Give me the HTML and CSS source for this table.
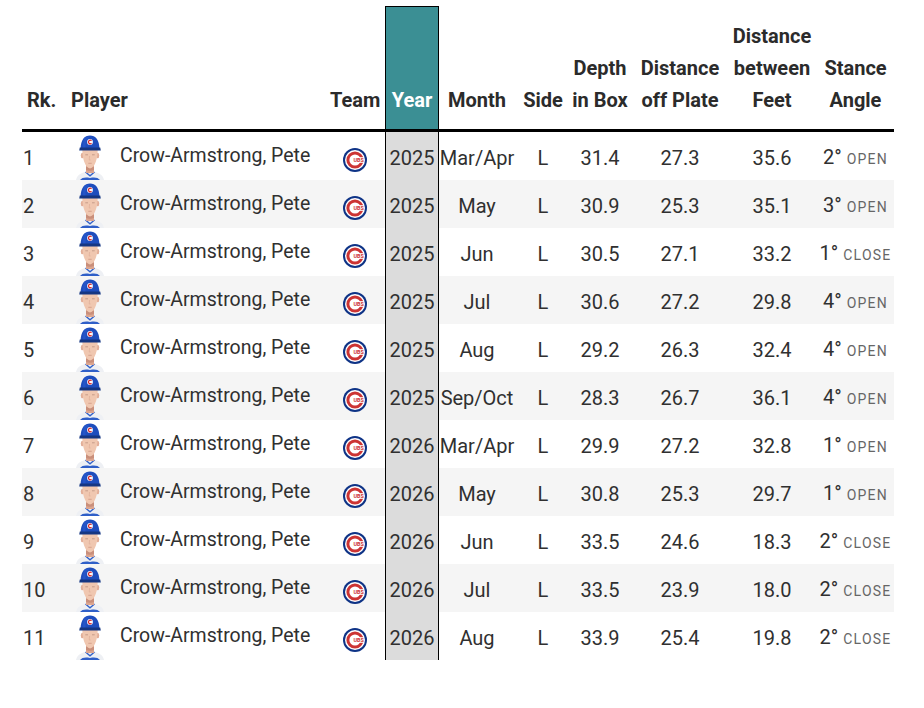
FILE: index.html
```html
<!DOCTYPE html>
<html lang="en">
<head>
<meta charset="utf-8">
<title>Batting Stance</title>
<link rel="stylesheet" href="styles.css">
</head>
<body>
<div class="page">
<table class="stats">
  <colgroup>
    <col class="c-rk"><col class="c-img"><col class="c-name"><col class="c-team"><col class="c-year">
    <col class="c-month"><col class="c-side"><col class="c-depth"><col class="c-dop"><col class="c-feet"><col class="c-angle">
  </colgroup>
  <thead>
    <tr>
      <th class="rk">Rk.</th>
      <th class="player" colspan="2">Player</th>
      <th class="team">Team</th>
      <th class="year">Year</th>
      <th>Month</th>
      <th>Side</th>
      <th>Depth<br>in Box</th>
      <th>Distance<br>off Plate</th>
      <th>Distance<br>between<br>Feet</th>
      <th class="angle">Stance<br>Angle</th>
    </tr>
  </thead>
  <tbody>
    <tr><td class="rk">1</td><td class="img"><svg class="head" viewBox="0 0 30 46"><use href="#head"/></svg></td><td class="name">Crow-Armstrong, Pete</td><td class="team"><svg class="logo" viewBox="0 0 24 24"><use href="#cubs"/></svg></td><td class="year">2025</td><td class="num">Mar/Apr</td><td class="num">L</td><td class="num">31.4</td><td class="num">27.3</td><td class="num">35.6</td><td class="num angle">2°<span class="dir">OPEN</span></td></tr>
    <tr><td class="rk">2</td><td class="img"><svg class="head" viewBox="0 0 30 46"><use href="#head"/></svg></td><td class="name">Crow-Armstrong, Pete</td><td class="team"><svg class="logo" viewBox="0 0 24 24"><use href="#cubs"/></svg></td><td class="year">2025</td><td class="num">May</td><td class="num">L</td><td class="num">30.9</td><td class="num">25.3</td><td class="num">35.1</td><td class="num angle">3°<span class="dir">OPEN</span></td></tr>
    <tr><td class="rk">3</td><td class="img"><svg class="head" viewBox="0 0 30 46"><use href="#head"/></svg></td><td class="name">Crow-Armstrong, Pete</td><td class="team"><svg class="logo" viewBox="0 0 24 24"><use href="#cubs"/></svg></td><td class="year">2025</td><td class="num">Jun</td><td class="num">L</td><td class="num">30.5</td><td class="num">27.1</td><td class="num">33.2</td><td class="num angle">1°<span class="dir">CLOSE</span></td></tr>
    <tr><td class="rk">4</td><td class="img"><svg class="head" viewBox="0 0 30 46"><use href="#head"/></svg></td><td class="name">Crow-Armstrong, Pete</td><td class="team"><svg class="logo" viewBox="0 0 24 24"><use href="#cubs"/></svg></td><td class="year">2025</td><td class="num">Jul</td><td class="num">L</td><td class="num">30.6</td><td class="num">27.2</td><td class="num">29.8</td><td class="num angle">4°<span class="dir">OPEN</span></td></tr>
    <tr><td class="rk">5</td><td class="img"><svg class="head" viewBox="0 0 30 46"><use href="#head"/></svg></td><td class="name">Crow-Armstrong, Pete</td><td class="team"><svg class="logo" viewBox="0 0 24 24"><use href="#cubs"/></svg></td><td class="year">2025</td><td class="num">Aug</td><td class="num">L</td><td class="num">29.2</td><td class="num">26.3</td><td class="num">32.4</td><td class="num angle">4°<span class="dir">OPEN</span></td></tr>
    <tr><td class="rk">6</td><td class="img"><svg class="head" viewBox="0 0 30 46"><use href="#head"/></svg></td><td class="name">Crow-Armstrong, Pete</td><td class="team"><svg class="logo" viewBox="0 0 24 24"><use href="#cubs"/></svg></td><td class="year">2025</td><td class="num">Sep/Oct</td><td class="num">L</td><td class="num">28.3</td><td class="num">26.7</td><td class="num">36.1</td><td class="num angle">4°<span class="dir">OPEN</span></td></tr>
    <tr><td class="rk">7</td><td class="img"><svg class="head" viewBox="0 0 30 46"><use href="#head"/></svg></td><td class="name">Crow-Armstrong, Pete</td><td class="team"><svg class="logo" viewBox="0 0 24 24"><use href="#cubs"/></svg></td><td class="year">2026</td><td class="num">Mar/Apr</td><td class="num">L</td><td class="num">29.9</td><td class="num">27.2</td><td class="num">32.8</td><td class="num angle">1°<span class="dir">OPEN</span></td></tr>
    <tr><td class="rk">8</td><td class="img"><svg class="head" viewBox="0 0 30 46"><use href="#head"/></svg></td><td class="name">Crow-Armstrong, Pete</td><td class="team"><svg class="logo" viewBox="0 0 24 24"><use href="#cubs"/></svg></td><td class="year">2026</td><td class="num">May</td><td class="num">L</td><td class="num">30.8</td><td class="num">25.3</td><td class="num">29.7</td><td class="num angle">1°<span class="dir">OPEN</span></td></tr>
    <tr><td class="rk">9</td><td class="img"><svg class="head" viewBox="0 0 30 46"><use href="#head"/></svg></td><td class="name">Crow-Armstrong, Pete</td><td class="team"><svg class="logo" viewBox="0 0 24 24"><use href="#cubs"/></svg></td><td class="year">2026</td><td class="num">Jun</td><td class="num">L</td><td class="num">33.5</td><td class="num">24.6</td><td class="num">18.3</td><td class="num angle">2°<span class="dir">CLOSE</span></td></tr>
    <tr><td class="rk">10</td><td class="img"><svg class="head" viewBox="0 0 30 46"><use href="#head"/></svg></td><td class="name">Crow-Armstrong, Pete</td><td class="team"><svg class="logo" viewBox="0 0 24 24"><use href="#cubs"/></svg></td><td class="year">2026</td><td class="num">Jul</td><td class="num">L</td><td class="num">33.5</td><td class="num">23.9</td><td class="num">18.0</td><td class="num angle">2°<span class="dir">CLOSE</span></td></tr>
    <tr><td class="rk">11</td><td class="img"><svg class="head" viewBox="0 0 30 46"><use href="#head"/></svg></td><td class="name">Crow-Armstrong, Pete</td><td class="team"><svg class="logo" viewBox="0 0 24 24"><use href="#cubs"/></svg></td><td class="year">2026</td><td class="num">Aug</td><td class="num">L</td><td class="num">33.9</td><td class="num">25.4</td><td class="num">19.8</td><td class="num angle">2°<span class="dir">CLOSE</span></td></tr>
  </tbody>
</table>
</div>

<svg class="defs" width="0" height="0" aria-hidden="true">
  <defs>
    <symbol id="head" viewBox="0 0 30 46">
      <path d="M1 46 C2 41 6 39 10 38 L20 38 C24 39 28 41 29 46 Z" fill="#eef0f4"/>
      <path d="M5 46 C7 43.8 10 43 15 44 C20 43 23 43.8 25 46 Z" fill="#2f5fc8"/>
      <path d="M10.5 38 L15 41.8 L19.5 38" fill="none" stroke="#2f5fc8" stroke-width="1.3"/>
      <rect x="11" y="29" width="8" height="10" fill="#dca58f"/>
      <path d="M11 33 L19 33 L19 36 C17 37 13 37 11 36 Z" fill="#c98f7b"/>
      <ellipse cx="7.3" cy="21.5" rx="1.5" ry="2.8" fill="#e2ae98"/>
      <ellipse cx="22.7" cy="21.5" rx="1.5" ry="2.8" fill="#e2ae98"/>
      <path d="M7.3 14 C7.3 25 9.8 33 15 34.6 C20.2 33 22.7 25 22.7 14 Z" fill="#f0c7b0"/>
      <path d="M10.3 20.8 L13 20.8 M17 20.8 L19.7 20.8" stroke="#b68b78" stroke-width="0.7"/>
      <path d="M14.6 22 L14.2 26 L15.6 26" fill="none" stroke="#dca993" stroke-width="0.6"/>
      <path d="M13.3 29.3 L16.7 29.3" stroke="#cf9987" stroke-width="0.8"/>
      <path d="M5.6 15 C5.6 6 9.6 1.6 15 1.6 C20.4 1.6 24.4 6 24.4 15 Z" fill="#1e4dbd"/>
      <path d="M9 4 C11 3 13 2.6 15 2.6 C12 4 10.5 8 10.5 14 L8 14 C8 9 8.3 6 9 4 Z" fill="#2a5ccf" opacity="0.6"/>
      <path d="M4.8 13.4 L25.2 13.4 L25.8 16.4 L4.2 16.4 Z" fill="#153683"/>
      <circle cx="15" cy="8" r="2.9" fill="#ffffff"/>
      <path d="M16.5 6.7 A1.8 1.8 0 1 0 16.5 9.3" fill="none" stroke="#d3262c" stroke-width="1.2"/>
    </symbol>
    <symbol id="cubs" viewBox="0 0 24 24">
      <circle cx="12" cy="12" r="12" fill="#0e3386"/>
      <circle cx="12" cy="12" r="10" fill="#ffffff"/>
      <circle cx="12" cy="12" r="8.6" fill="#cc3433"/>
      <circle cx="12" cy="12" r="5.6" fill="#ffffff"/>
      <rect x="12" y="9.2" width="9" height="5.6" fill="#ffffff"/>
      <text x="15.6" y="14.1" text-anchor="middle" font-family="Roboto, sans-serif" font-weight="700" font-size="5.4" fill="#cc3433">UBS</text>
    </symbol>
  </defs>
</svg>
</body>
</html>
```

FILE: styles.css
```css
body {
  margin: 0;
  background: #ffffff;
}

.page {
  padding: 6px 0 0 22px;
}

.stats {
  width: 872px;
  table-layout: fixed;
  border-collapse: separate;
  border-spacing: 0;
  font-family: Roboto, "Noto Sans", sans-serif;
  color: #303030;
}

.c-rk { width: 46px; }
.c-img { width: 44px; }
.c-name { width: 218px; }
.c-team { width: 55px; }
.c-year { width: 54px; }
.c-month { width: 76px; }
.c-side { width: 56px; }
.c-depth { width: 58px; }
.c-dop { width: 102px; }
.c-feet { width: 82px; }
.c-angle { width: 81px; }

.stats th {
  font-size: 20px;
  font-weight: 700;
  line-height: 32px;
  vertical-align: bottom;
  text-align: center;
  white-space: nowrap;
  padding: 14px 0 13px;
  color: #2b2b2b;
  border-bottom: 3px solid #000000;
}

.stats th.rk {
  text-align: left;
  padding-left: 5px;
}

.stats th.player {
  text-align: left;
  padding-left: 3px;
}

.stats th.team {
  padding-right: 6px;
}

.stats th.year {
  background: #3b8f94;
  color: #ffffff;
  border-top: 1px solid #000000;
  border-left: 1px solid #000000;
  border-right: 1px solid #000000;
}

.stats th.angle {
  padding-left: 4px;
}

.stats tbody tr {
  height: 48px;
}

.stats td {
  padding: 0;
  font-size: 20px;
  line-height: 24px;
  vertical-align: middle;
  text-align: center;
  white-space: nowrap;
  background: #ffffff;
}

.stats tbody tr:nth-child(even) td {
  background: #f5f5f5;
}

.stats td.rk {
  text-align: left;
  padding-left: 1px;
  padding-top: 3px;
  font-size: 20px;
}

.stats td.img {
  vertical-align: top;
}

.head {
  display: block;
  width: 30px;
  height: 46px;
  margin: 2px auto 0;
}

.stats td.name {
  text-align: left;
  padding-left: 8px;
  font-size: 19.5px;
}

.stats td.team {
  vertical-align: top;
  padding-top: 16px;
  padding-right: 6px;
}

.logo {
  display: block;
  width: 24px;
  height: 24px;
  margin: 0 auto;
}

.stats td.year,
.stats tbody tr:nth-child(even) td.year {
  background: #dcdcdc;
  border-left: 1px solid #000000;
  border-right: 1px solid #000000;
  padding-top: 4px;
}

.stats td.num {
  padding-top: 4px;
}

.stats td.angle {
  padding-left: 4px;
}

.dir {
  margin-left: 5px;
  font-size: 14px;
  letter-spacing: 1.2px;
  color: #666666;
}

.defs {
  display: block;
  overflow: hidden;
}
```
